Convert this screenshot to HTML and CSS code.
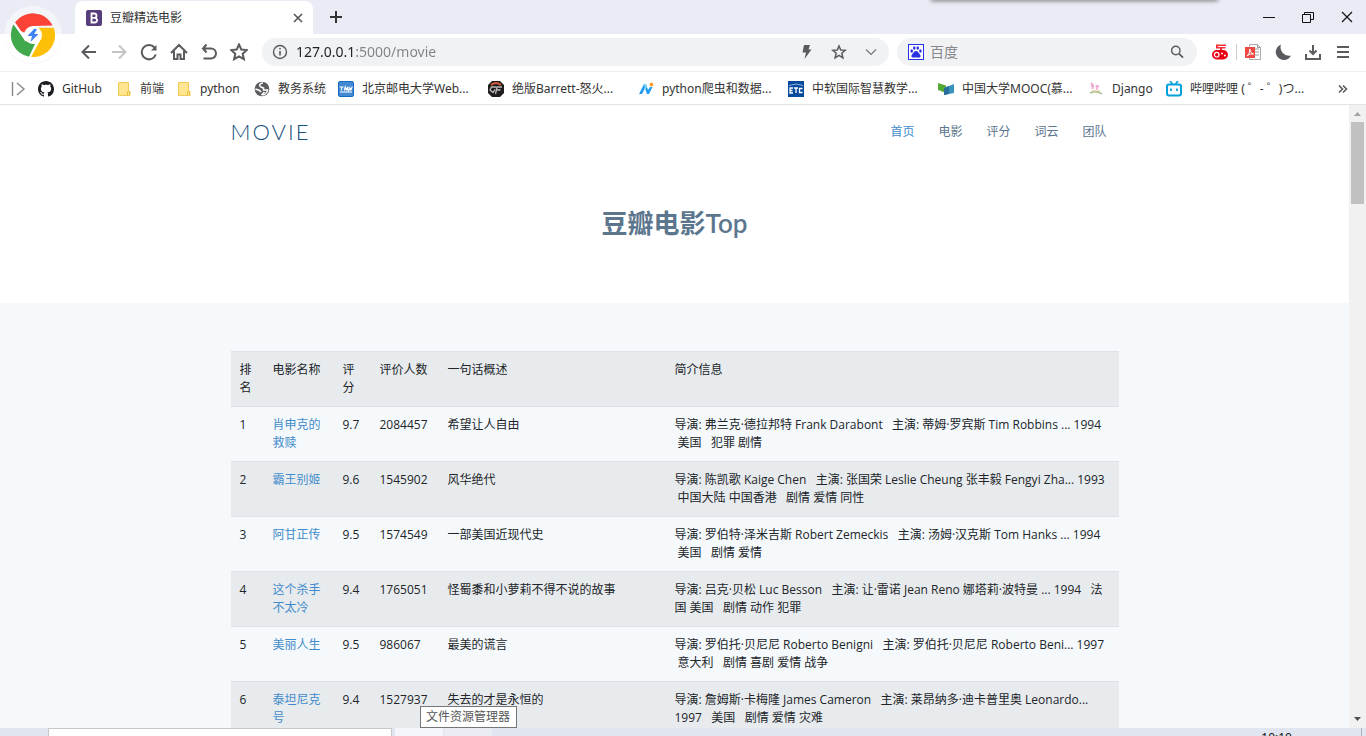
FILE: index.html
```html
<!DOCTYPE html>
<html lang="zh-CN">
<head>
<meta charset="utf-8">
<title>豆瓣精选电影</title>
<link rel="stylesheet" href="styles.css">
</head>
<body>
<div class="browser">
  <header class="tab-strip">
    <button class="app-logo" aria-label="浏览器菜单">
      <svg width="58" height="58" viewBox="0 0 58 58">
        <circle cx="29" cy="29" r="29" fill="#f4f5f9"/>
        <path d="M0 28H58A29 29 0 0 1 0 28z" fill="#fff"/>
        <path d="M11 16.500 A22 22 0 0 1 48.500 19.500 L29 20 L21 27 L17 25z" fill="#fb4236"/>
        <path d="M9.500 18.500 A22 22 0 0 0 25 50.700 L31 38 L22 35z" fill="#40a94b"/>
        <path d="M49.800 21.800 A22 22 0 0 1 27 51 L37.500 32 L34 21.800z" fill="#fdbf07"/>
        <path d="M10.500 17.500 L22 35" stroke="#fff" stroke-width="1.500" fill="none"/>
        <circle cx="29" cy="29" r="9" fill="#fff"/>
        <path d="M30.500 22.500 L23.500 30H28L26.500 36L34.500 28H30L33 23.500z" fill="#3d82f4"/>
      </svg>
    </button>
    <div class="tab">
      <svg width="16" height="16" viewBox="0 0 16 16"><rect width="16" height="16" rx="2" fill="#563d7c"/><path d="M5.500 3.500V12.500H8.600C11.800 12.500 11.800 8 8.800 7.800C11.300 7.400 11 3.500 8.300 3.500zM5.500 7.800H8.800" fill="none" stroke="#fff" stroke-width="1.800"/></svg>
      <span class="tab-title">豆瓣精选电影</span>
      <button class="tab-close" aria-label="关闭标签页"><svg width="10" height="10" viewBox="0 0 10 10"><path d="M1 1L9 9M9 1L1 9" stroke="#555" stroke-width="1.600"/></svg></button>
    </div>
    <button class="new-tab" aria-label="新标签页"><svg width="12" height="12" viewBox="0 0 12 12"><path d="M6 0V12M0 6H12" stroke="#333" stroke-width="2"/></svg></button>
    <div class="window-buttons">
      <button aria-label="最小化"><svg width="12" height="12" viewBox="0 0 12 12"><path d="M0 6.500H12" stroke="#111"/></svg></button>
      <button aria-label="还原"><svg width="12" height="12" viewBox="0 0 12 12"><path d="M.5 3.500H8.500V11.500H.5zM2.500 3V1.500H11.500V8.500H9" fill="none" stroke="#111"/></svg></button>
      <button aria-label="关闭"><svg width="12" height="12" viewBox="0 0 12 12"><path d="M1 1L11 11M11 1L1 11" stroke="#111" stroke-width="1.200"/></svg></button>
    </div>
    <div class="top-shadow"></div>
  </header>

  <div class="toolbar">
    <button class="tool" aria-label="后退"><svg width="18" height="18" viewBox="0 0 18 18"><path d="M16 9H3M9 2.500L2.500 9L9 15.500" class="line"/></svg></button>
    <button class="tool" aria-label="前进"><svg width="18" height="18" viewBox="0 0 18 18"><path d="M2 9H15M9 2.500L15.500 9L9 15.500" class="line pale"/></svg></button>
    <button class="tool" aria-label="刷新"><svg width="18" height="18" viewBox="0 0 18 18"><path d="M15.800 11.500A7.200 7.200 0 1 1 14.500 4.500" class="line"/><path d="M16.500 2V7.500H11z" fill="#5a5b5e"/></svg></button>
    <button class="tool" aria-label="主页"><svg width="18" height="18" viewBox="0 0 18 18"><path d="M1 10L9 2L17 10M4 8V16H7.500V11.500H10.500V16H14V8" class="line"/></svg></button>
    <button class="tool" aria-label="恢复"><svg width="18" height="18" viewBox="0 0 18 18"><path d="M6.500 1.500L3 5.500L6.500 9.500M3 5.500H11A5 5 0 0 1 11 15.500H3.500" class="line"/></svg></button>
    <button class="tool" aria-label="收藏夹"><svg width="18" height="18" viewBox="0 0 18 18"><path d="M9 1.500L11.300 6.500L16.800 7.100L12.700 10.800L13.900 16.200L9 13.400L4.100 16.200L5.300 10.800L1.200 7.100L6.700 6.500z" class="line"/></svg></button>
    <div class="pill address">
      <svg width="16" height="16" viewBox="0 0 16 16"><circle cx="8" cy="8" r="6.500" fill="none" stroke="#5a5b5e" stroke-width="1.400"/><path d="M8 7V11.500M8 4V5.600" stroke="#5a5b5e" stroke-width="1.600"/></svg>
      <input class="address-input" type="text" aria-label="地址" value="127.0.0.1:5000/movie">
      <button class="pill-button" aria-label="极速模式"><svg width="16" height="16" viewBox="0 0 16 16"><path d="M5 1H11L9.500 5.500H12.500L5.500 15L7 8.500H3.500z" fill="#5a5b5e"/></svg></button>
      <button class="pill-button" aria-label="收藏"><svg width="16" height="16" viewBox="0 0 16 16"><path d="M8 2L9.700 6L14.200 6.300L10.800 9.200L11.900 13.800L8 11.300L4.100 13.800L5.200 9.200L1.800 6.300L6.300 6z" fill="none" stroke="#5a5b5e" stroke-width="1.500"/></svg></button>
      <button class="pill-button" aria-label="展开"><svg width="16" height="16" viewBox="0 0 16 16"><path d="M3 5.500L8 10.500L13 5.500" fill="none" stroke="#77787b" stroke-width="1.200"/></svg></button>
    </div>
    <div class="pill search">
      <svg width="16" height="16" viewBox="0 0 16 16"><rect x=".5" y=".5" width="15" height="15" fill="#fff" stroke="#2932e1"/><g fill="#2932e1"><ellipse cx="3.700" cy="7" rx="1.300" ry="1.700"/><ellipse cx="6.300" cy="4" rx="1.300" ry="1.800"/><ellipse cx="9.800" cy="4" rx="1.300" ry="1.800"/><ellipse cx="12.400" cy="7" rx="1.300" ry="1.700"/><path d="M8 7C10 7 10.500 9 12 10.500C13.500 12.500 12 14 10 13.600Q8 13.200 6 13.600C4 14 2.500 12.500 4 10.500C5.500 9 6 7 8 7z"/></g></svg>
      <input class="search-input" type="text" aria-label="搜索" placeholder="百度">
      <button class="pill-button" aria-label="搜索"><svg width="16" height="16" viewBox="0 0 16 16"><circle cx="6.800" cy="6.500" r="4.200" fill="none" stroke="#5a5b5e" stroke-width="1.400"/><path d="M10 9.700L14 13.700" stroke="#5a5b5e" stroke-width="1.700"/></svg></button>
    </div>
    <div class="extensions">
      <button class="tool" aria-label="游戏"><svg width="16" height="16" viewBox="0 0 16 16"><path d="M4 .5H14V2H6V3H13.500V4.500H10V6H8V4.500H4z" fill="#f0303a"/><rect y="6" width="16" height="9.500" rx="4.700" fill="#e60012"/><circle cx="4.700" cy="10.700" r="2.300" fill="none" stroke="#fff" stroke-width="1.200"/><circle cx="10" cy="9.500" r="1" fill="#fff"/><circle cx="13" cy="11.500" r="1" fill="#fff"/></svg></button>
      <span class="divider"></span>
      <button class="tool" aria-label="PDF"><svg width="18" height="16" viewBox="0 0 18 16"><path d="M5.500 .5H13.500L16.500 3.500V15.500H5.500z" fill="#fff" stroke="#aaa"/><path d="M11 5H15M11 8H15M11 11H15M13.500 .5V3.500H16.500" stroke="#999" fill="none"/><rect x="1" y="3" width="10" height="11" fill="#ee4a43"/><path d="M3 12C5 10 6 8 5.800 5C6.500 8 7 9 9.500 10Q6 9 3 12" fill="none" stroke="#fff"/></svg></button>
      <button class="tool" aria-label="夜间模式"><svg width="18" height="18" viewBox="0 0 18 18"><path d="M7 1.500A8 8 0 1 0 17 12.500A8.500 8.500 0 0 1 7 1.500z" fill="#5a5b5e"/></svg></button>
      <button class="tool" aria-label="下载"><svg width="16" height="16" viewBox="0 0 16 16"><path d="M8 1V10M4.500 6.500L8 10L11.500 6.500M1 10V15H15V10" class="line"/></svg></button>
      <button class="tool" aria-label="菜单"><svg width="14" height="14" viewBox="0 0 14 14"><path d="M1 2H13M1 7H13M1 12H13" class="line"/></svg></button>
    </div>
  </div>

  <nav class="bookmarks" aria-label="书签">
    <button class="bookmark-toggle" aria-label="收起书签"><svg width="16" height="16" viewBox="0 0 16 16"><path d="M2.500 1V15M7 2L14 8L7 14" fill="none" stroke="#888" stroke-width="1.400"/></svg></button>
    <a class="bookmark short" href="#"><svg width="16" height="16" viewBox="0 0 16 16"><path fill="#1b1f23" d="M8 0C3.580 0 0 3.580 0 8c0 3.540 2.290 6.530 5.470 7.590.4.070.55-.17.55-.38 0-.19-.01-.82-.01-1.490-2.010.37-2.530-.49-2.690-.94-.09-.23-.48-.94-.82-1.130-.28-.15-.68-.52-.01-.53.63-.01 1.080.58 1.230.82.72 1.210 1.870.87 2.330.66.07-.52.28-.87.51-1.070-1.780-.2-3.640-.89-3.640-3.950 0-.87.31-1.590.82-2.150-.08-.2-.36-1.020.08-2.120 0 0 .67-.21 2.200.82.64-.18 1.320-.27 2-.27s1.360.09 2 .27c1.530-1.040 2.200-.82 2.200-.82.44 1.100.16 1.920.08 2.120.51.56.82 1.270.82 2.150 0 3.070-1.870 3.750-3.650 3.950.29.25.54.73.54 1.480 0 1.070-.01 1.930-.01 2.200 0 .21.15.46.55.38A8.010 8.010 0 0 0 16 8c0-4.420-3.580-8-8-8z"/></svg><span>GitHub</span></a>
    <a class="bookmark" href="#"><svg width="16" height="16" viewBox="0 0 16 16"><path d="M2.500 1.500H12.500V9.500L14 10.500V14.500H2.500z" fill="#ffe58f" stroke="#f0cb55"/><path d="M11.500 14V10.500H13.500V14" fill="#ffe9a4" stroke="#e9bf3a"/></svg><span>前端</span></a>
    <a class="bookmark short" href="#"><svg width="16" height="16" viewBox="0 0 16 16"><path d="M2.500 1.500H12.500V9.500L14 10.500V14.500H2.500z" fill="#ffe58f" stroke="#f0cb55"/><path d="M11.500 14V10.500H13.500V14" fill="#ffe9a4" stroke="#e9bf3a"/></svg><span>python</span></a>
    <a class="bookmark" href="#"><svg width="16" height="16" viewBox="0 0 16 16"><circle cx="8" cy="8" r="7.300" fill="#5a5b5e"/><path d="M9 1.800C5 2.500 5 5 7 6L9.500 7V9L13.500 9C13.500 12 10 14.500 8 13.500L10.500 11" fill="none" stroke="#fff" stroke-width="1.500"/><path d="M1.500 8L5.500 9.500L7 11" fill="none" stroke="#fff" stroke-width="1.700"/></svg><span>教务系统</span></a>
    <a class="bookmark wide" href="#"><svg width="16" height="16" viewBox="0 0 16 16"><rect x=".5" y=".5" width="15" height="15" rx="1.500" fill="#4289d2" stroke="#146ac5"/><path d="M1.500 6H5.500M4 6L3.200 9.500M6.300 9.500L7.200 6L8.200 8.800L9.700 6L9.300 9.500M11.300 5.500L10.700 9.500L12.500 7.500L12.700 9.500L14.300 5.500M2 11H14" fill="none" stroke="#fff" stroke-width="1.100"/></svg><span>北京邮电大学Web...</span></a>
    <a class="bookmark wide" href="#"><svg width="16" height="16" viewBox="0 0 16 16"><path d="M4 0H12L16 4V12L12 16H4L0 12V4z" fill="#201d1d"/><path d="M3 4Q8 0 13 4" fill="none" stroke="#d4583c" stroke-width="1.800"/><path d="M8 6H3.500L2 9L5 11.500L7 8.500M14 6H9L7.500 13M8.500 9H12.500" fill="none" stroke="#bbb" stroke-width="1.300"/></svg><span>绝版Barrett-怒火...</span></a>
    <a class="bookmark wide" href="#"><svg width="16" height="16" viewBox="0 0 16 16"><path d="M1 13L6 3H8L10 9L12 6H14.500L11 13H9L7 7L4 13z" fill="#219bf3"/><path d="M6 3H8L9 6L7 9z" fill="#7bd2fa"/><circle cx="13.500" cy="3.500" r="1.900" fill="#ff9d2e"/></svg><span>python爬虫和数据...</span></a>
    <a class="bookmark wide" href="#"><svg width="16" height="16" viewBox="0 0 16 16"><rect width="16" height="16" fill="#064a9c"/><path d="M1 4.500Q8 1.500 15 4.500" fill="none" stroke="#8eb3e0"/><path d="M5 7H2V12H5M2 9.500H4.500M6 7H10M8 7V12M14.500 7.500H11.500V11.500H14.500" fill="none" stroke="#fff" stroke-width="1.300"/></svg><span>中软国际智慧教学...</span></a>
    <a class="bookmark wide" href="#"><svg width="16" height="16" viewBox="0 0 16 16"><path d="M0 2L8 4.500V12L0 9z" fill="#55aa35"/><path d="M6 7L16 3V12L6 14z" fill="#3a92be"/><path d="M6 7L11 5V13L6 14z" fill="#276f98"/></svg><span>中国大学MOOC(慕...</span></a>
    <a class="bookmark short" href="#"><svg width="16" height="16" viewBox="0 0 16 16"><path d="M3 2L5 4L4.500 8M8.500 4L9 8.500M3 5L6 5.500M8 6L11 5" stroke="#efadcf" stroke-width="2" fill="none"/><path d="M2 12Q8 9 14 13" fill="none" stroke="#a3bf85" stroke-width="1.500"/><path d="M4 10H12" stroke="#e5bd8d"/></svg><span>Django</span></a>
    <a class="bookmark" href="#"><svg width="16" height="16" viewBox="0 0 16 16"><path d="M4 0L6.500 3M12 0L9.500 3" stroke="#05a0db" stroke-width="1.700"/><rect x="1" y="3.500" width="14" height="11" rx="2" fill="none" stroke="#05a0db" stroke-width="2"/><path d="M5 7.500V10M11 7.500V10" stroke="#05a0db" stroke-width="1.800"/></svg><span>哔哩哔哩 ( ゜- ゜)つ...</span></a>
    <button class="more-bookmarks" aria-label="更多书签"><svg width="10" height="10" viewBox="0 0 10 10"><path d="M1 1.500L4.500 5L1 8.500M5 1.500L8.500 5L5 8.500" fill="none" stroke="#555" stroke-width="1.500"/></svg></button>
  </nav>

  <div class="viewport">
    <div class="page">
      <div class="hero">
        <div class="container site-header">
          <a class="site-logo" href="#">MOVIE</a>
          <nav class="site-nav">
            <a class="active" href="#">首页</a>
            <a href="#">电影</a>
            <a href="#">评分</a>
            <a href="#">词云</a>
            <a href="#">团队</a>
          </nav>
        </div>
        <h2 class="page-title">豆瓣电影<span>Top</span></h2>
      </div>
      <main class="container listing">
        <table class="movies">
          <colgroup><col class="col-rank"><col class="col-name"><col class="col-score"><col class="col-votes"><col class="col-quote"><col></colgroup>
          <tbody>
          <tr><td>排名</td><td>电影名称</td><td>评分</td><td>评价人数</td><td>一句话概述</td><td>简介信息</td></tr>
          <tr><td>1</td><td><a href="#">肖申克的救赎</a></td><td>9.7</td><td>2084457</td><td>希望让人自由</td><td>导演: 弗兰克·德拉邦特 Frank Darabont&nbsp;&nbsp;&nbsp;主演: 蒂姆·罗宾斯 Tim Robbins ... 1994 &nbsp;美国&nbsp; &nbsp;犯罪 剧情</td></tr>
          <tr><td>2</td><td><a href="#">霸王别姬</a></td><td>9.6</td><td>1545902</td><td>风华绝代</td><td>导演: 陈凯歌 Kaige Chen&nbsp;&nbsp;&nbsp;主演: 张国荣 Leslie Cheung 张丰毅 Fengyi Zha... 1993 &nbsp;中国大陆 中国香港&nbsp; &nbsp;剧情 爱情 同性</td></tr>
          <tr><td>3</td><td><a href="#">阿甘正传</a></td><td>9.5</td><td>1574549</td><td>一部美国近现代史</td><td>导演: 罗伯特·泽米吉斯 Robert Zemeckis&nbsp;&nbsp;&nbsp;主演: 汤姆·汉克斯 Tom Hanks ... 1994 &nbsp;美国&nbsp; &nbsp;剧情 爱情</td></tr>
          <tr><td>4</td><td><a href="#">这个杀手不太冷</a></td><td>9.4</td><td>1765051</td><td>怪蜀黍和小萝莉不得不说的故事</td><td>导演: 吕克·贝松 Luc Besson&nbsp;&nbsp;&nbsp;主演: 让·雷诺 Jean Reno 娜塔莉·波特曼 ... 1994&nbsp; &nbsp;法国 美国&nbsp; &nbsp;剧情 动作 犯罪</td></tr>
          <tr><td>5</td><td><a href="#">美丽人生</a></td><td>9.5</td><td>986067</td><td>最美的谎言</td><td>导演: 罗伯托·贝尼尼 Roberto Benigni&nbsp;&nbsp;&nbsp;主演: 罗伯托·贝尼尼 Roberto Beni... 1997 &nbsp;意大利&nbsp; &nbsp;剧情 喜剧 爱情 战争</td></tr>
          <tr><td>6</td><td><a href="#">泰坦尼克号</a></td><td>9.4</td><td>1527937</td><td>失去的才是永恒的</td><td>导演: 詹姆斯·卡梅隆 James Cameron&nbsp;&nbsp;&nbsp;主演: 莱昂纳多·迪卡普里奥 Leonardo... 1997&nbsp; &nbsp;美国&nbsp; &nbsp;剧情 爱情 灾难</td></tr>
          </tbody>
        </table>
      </main>
    </div>
    <div class="scrollbar" aria-hidden="true">
      <svg width="17" height="17" viewBox="0 0 17 17"><path d="M5 11L8.500 7L12 11z" fill="#a3a3a3"/></svg>
      <div class="thumb"></div>
      <svg class="arrow-down" width="17" height="17" viewBox="0 0 17 17"><path d="M5 6L8.500 10L12 6z" fill="#505050"/></svg>
    </div>
  </div>

  <footer class="taskbar">
    <div class="task-search"></div>
    <div class="task-item"></div>
    <div class="task-item soft"></div>
    <time class="clock">10:10</time>
    <div class="show-desktop"></div>
    <div class="tooltip" role="tooltip">文件资源管理器</div>
  </footer>
</div>
</body>
</html>
```

FILE: styles.css
```css
* { box-sizing: border-box; }

body {
  margin: 0;
  font-family: "Noto Sans", "Noto Sans CJK SC", sans-serif;
  font-size: 12px;
  line-height: 18px;
  color: #333;
}

button {
  padding: 0;
  border: 0;
  background: none;
  display: flex;
  align-items: center;
  justify-content: center;
}

input {
  border: 0;
  padding: 0;
  background: none;
  font: inherit;
  outline: 0;
  min-width: 0;
}

a { text-decoration: none; }
svg { flex: none; display: block; }
.line { fill: none; stroke: #5a5b5e; stroke-width: 2; }
.pale { stroke: #c4c4c6; }

.browser {
  display: flex;
  flex-direction: column;
  height: 100vh;
  overflow: hidden;
}

/* Tab strip */
.tab-strip {
  position: relative;
  display: flex;
  flex: none;
  height: 34px;
  padding-left: 75px;
  background: #e9ecf5;
}
.app-logo {
  position: absolute;
  left: 4px;
  top: 6px;
  z-index: 2;
}
.tab {
  display: flex;
  align-items: center;
  gap: 8px;
  width: 238px;
  margin-top: 1px;
  padding: 0 10px 0 11px;
  background: #fff;
  border-radius: 8px 8px 0 0;
}
.tab-title { flex: 1; }
.tab-close { width: 10px; height: 16px; }
.new-tab { width: 46px; }
.window-buttons {
  display: flex;
  gap: 27px;
  margin-left: auto;
  padding-right: 13px;
}
.top-shadow {
  position: absolute;
  top: -2px;
  left: 932px;
  width: 285px;
  height: 2px;
  box-shadow: 0 0 4px 1px #777;
}

/* Toolbar */
.toolbar {
  display: flex;
  flex: none;
  align-items: center;
  height: 38px;
  padding: 0 8px 2px 74px;
  background: #fff;
  border-bottom: 1px solid #eeeff0;
}
.tool { width: 30px; height: 28px; }
.pill {
  display: flex;
  align-items: center;
  height: 28px;
  margin-left: 8px;
  border-radius: 14px;
  background: #f1f2f4;
  font-size: 14px;
}
.address { flex: 1; padding: 0 2px 0 10px; }
.address-input {
  flex: 1;
  height: 28px;
  margin-left: 8px;
  color: #777a80;
  background: linear-gradient(90deg, #202124 58px, #808388 58px);
  -webkit-background-clip: text;
  background-clip: text;
  -webkit-text-fill-color: transparent;
}
.pill-button { width: 32px; height: 28px; }
.search { width: 300px; padding: 0 4px 0 11px; }
.search-input { flex: 1; margin-left: 6px; }
.search-input::placeholder { color: #85878b; opacity: 1; }
.extensions { display: flex; align-items: center; margin-left: 8px; }
.divider { width: 1px; height: 16px; margin: 0 1px; background: #ccc; }

/* Bookmarks */
.bookmarks {
  display: flex;
  flex: none;
  align-items: center;
  gap: 12px;
  height: 33px;
  padding: 1px 18px 0 10px;
  background: #fff;
  border-bottom: 1px solid #e2e3e5;
}
.bookmark {
  display: flex;
  flex: none;
  align-items: center;
  gap: 8px;
  color: #333;
  white-space: nowrap;
}
.short { min-width: 66px; }
.wide { width: 138px; }
.more-bookmarks { margin-left: auto; }

/* Page */
.viewport {
  display: flex;
  flex: 1;
  min-height: 0;
}
.page {
  flex: 1;
  overflow: hidden;
  background: #f5f9fc;
  font-family: "Open Sans", "Noto Sans CJK SC", sans-serif;
}
.container { max-width: 888px; margin: 0 auto; }
.hero { background: #fff; padding-bottom: 63px; }
.site-header {
  display: flex;
  align-items: center;
  justify-content: space-between;
  height: 54px;
}
.site-logo {
  color: #16507b;
  font-family: Lato, sans-serif;
  font-size: 22px;
  font-weight: 300;
  letter-spacing: 2px;
}
.site-nav { display: flex; gap: 24px; padding-right: 12px; }
.site-nav a { color: #5c768d; }
.site-nav a.active { color: #428bca; }
.page-title {
  margin: 0;
  padding-top: 47px;
  color: #5c768d;
  font-family: Lato, "Noto Sans CJK SC", sans-serif;
  font-size: 26px;
  font-weight: 700;
  line-height: 34px;
  text-align: center;
}
.page-title span { font-weight: 600; }
.listing { padding-top: 48px; }

.movies {
  width: 100%;
  table-layout: fixed;
  border-collapse: collapse;
  color: #212529;
}
.movies td {
  padding: 9px;
  border-top: 1px solid #dee2e6;
  vertical-align: top;
  height: 55px;
}
.movies tr:nth-child(odd) { background: #e8ebee; }
.movies a { color: #428bca; }
.col-rank { width: 33px; }
.col-name { width: 70px; }
.col-score { width: 37px; }
.col-votes { width: 68px; }
.col-quote { width: 227px; }

.scrollbar {
  display: flex;
  flex-direction: column;
  flex: none;
  width: 17px;
  background: #f1f1f1;
}
.thumb { height: 82px; margin: 0 2px; background: #c1c1c1; }
.arrow-down { margin-top: auto; }

/* Taskbar */
.taskbar {
  position: relative;
  display: flex;
  flex: none;
  height: 8px;
  padding-left: 48px;
  background: #e0e5ef;
}
.task-search {
  width: 344px;
  margin-right: 3px;
  background: #fff;
  border: 1px solid #c8c8c8;
  border-bottom: 0;
}
.task-item { width: 48px; background: #f3f5fa; }
.task-item.soft { margin-left: 1px; background: #eaeef4; }
.clock {
  height: 8px;
  margin-left: auto;
  padding-top: 1px;
  overflow: hidden;
  color: #111;
}
.show-desktop { width: 5px; margin-left: 69px; border-left: 1px solid #aab0bc; }
.tooltip {
  position: absolute;
  left: 420px;
  bottom: 8px;
  padding: 1px 6px 1px 5px;
  border: 1px solid #767676;
  background: #fff;
  color: #575757;
}
```
